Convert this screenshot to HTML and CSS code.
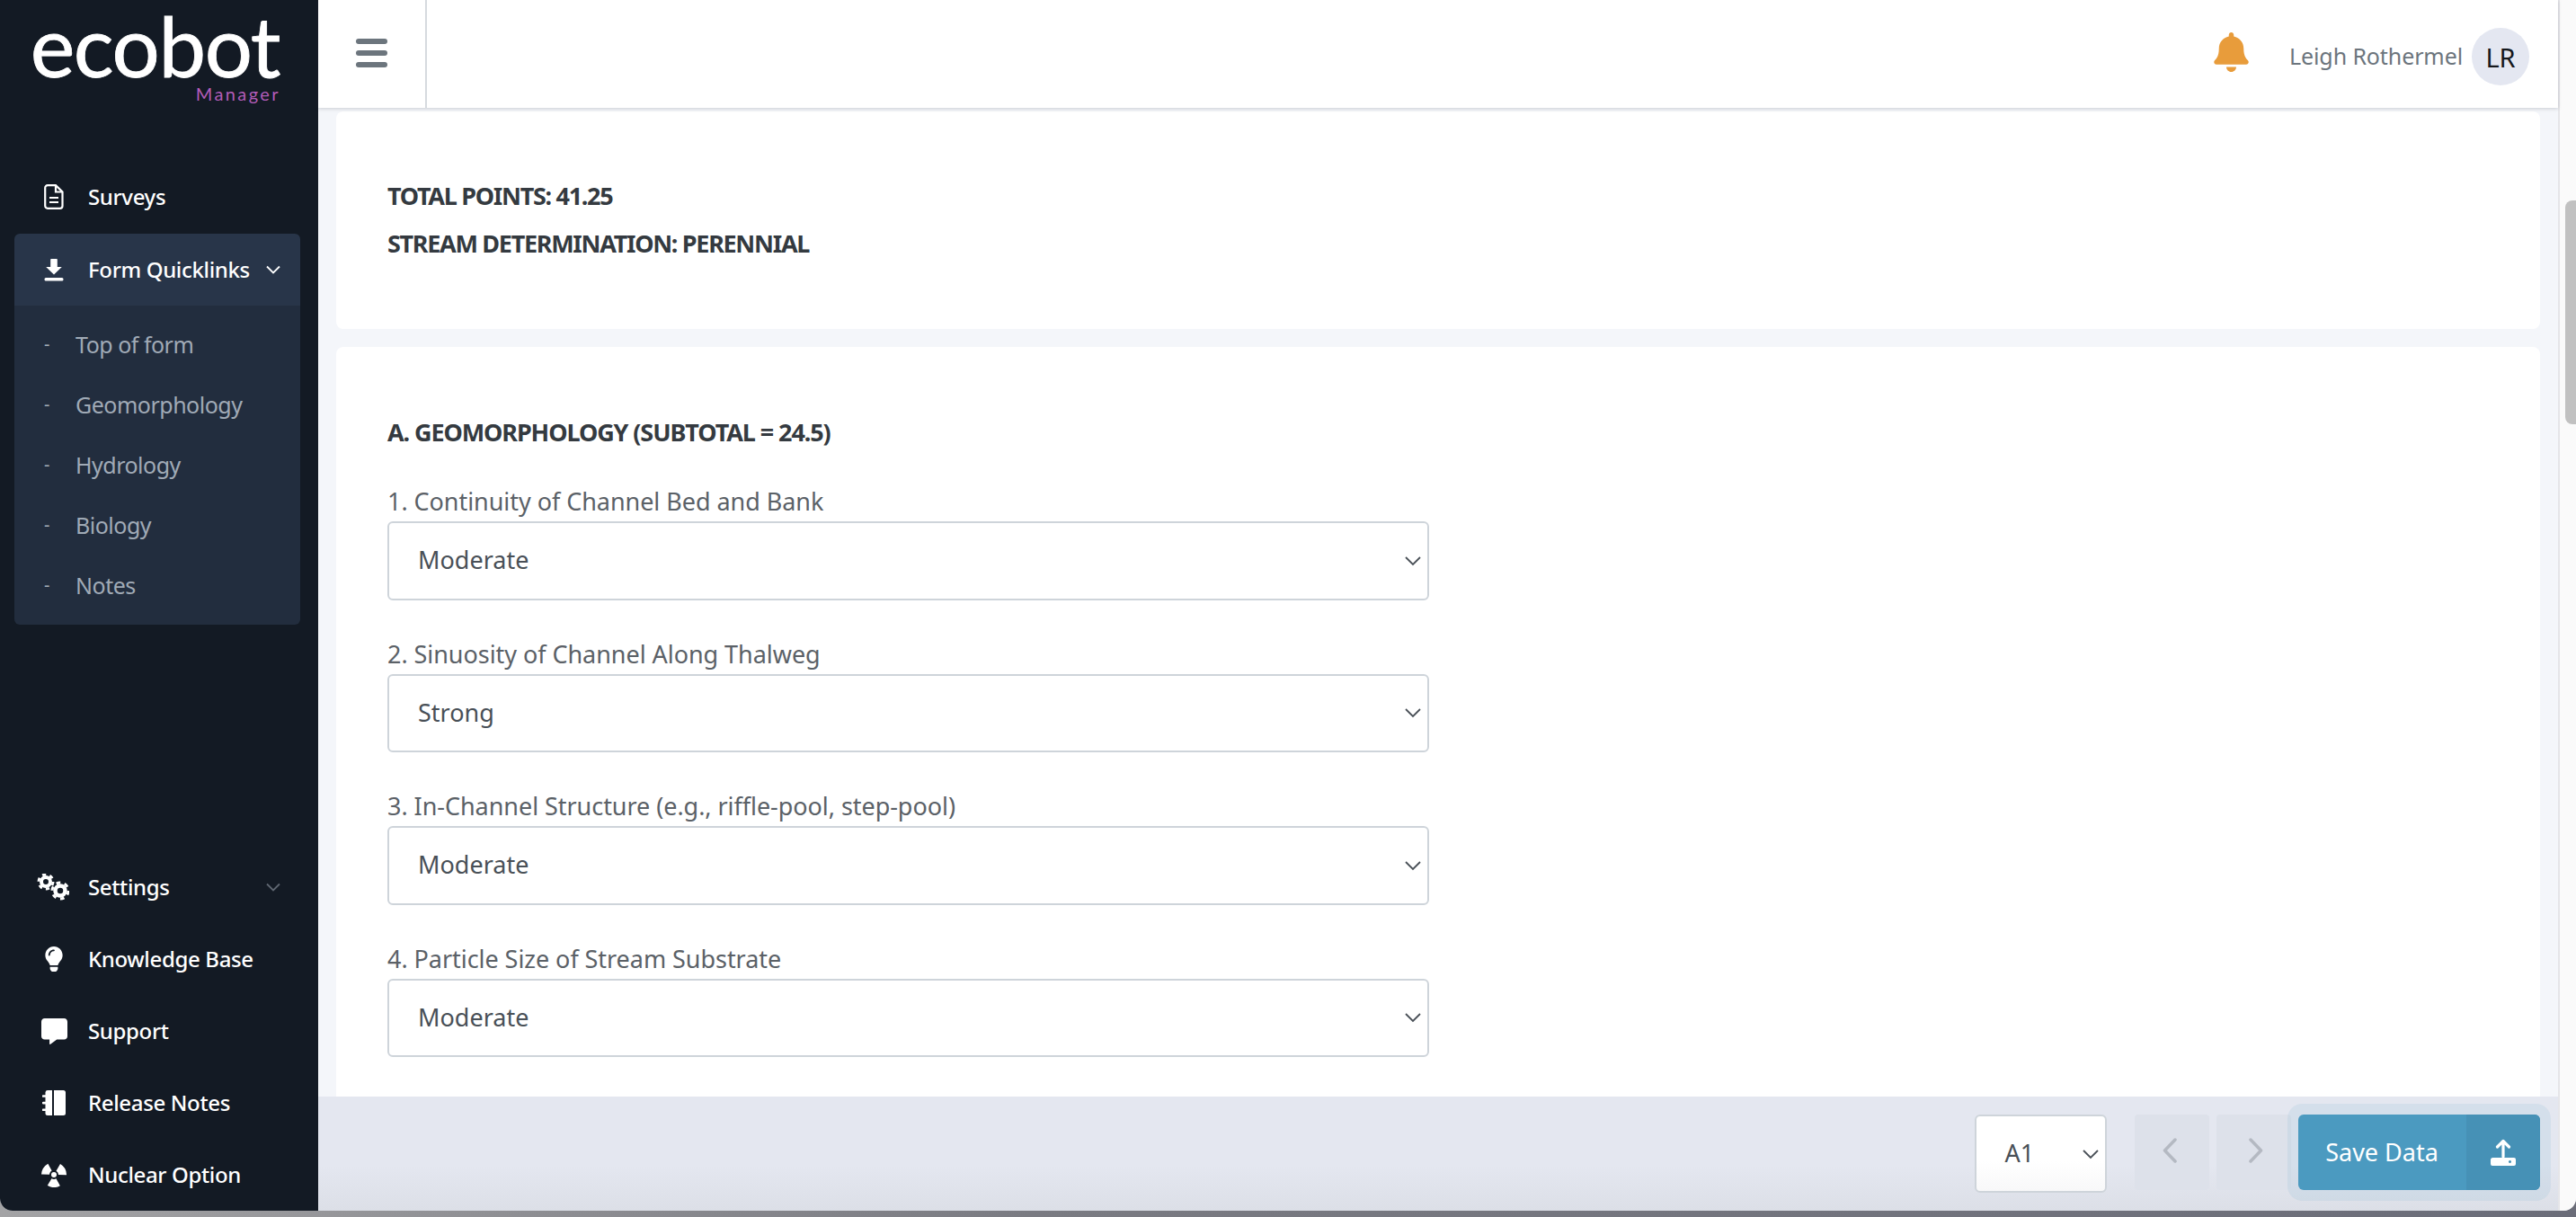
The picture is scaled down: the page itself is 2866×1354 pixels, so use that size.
FILE: index.html
```html
<!DOCTYPE html>
<html lang="en">
<head>
<meta charset="utf-8">
<title>Ecobot Manager</title>
<link rel="stylesheet" href="styles.css">
</head>
<body>
<div class="window">
  <aside class="sidebar">
    <div class="brand">
      <div class="brand-name">ecobot</div>
      <div class="brand-sub">Manager</div>
    </div>
    <nav class="nav">
      <a class="nav-row"><span class="nav-icon"><svg width="22" height="28" viewBox="0 0 22 28"><path d="M4 1.2h9l7.5 7.3V24a2.8 2.8 0 0 1-2.8 2.8H4A2.8 2.8 0 0 1 1.2 24V4A2.8 2.8 0 0 1 4 1.2z" fill="none" stroke="#fff" stroke-width="2.2"/><path d="M13 1.5v7h7M6 15h10M6 20h10" fill="none" stroke="#fff" stroke-width="2.2"/></svg></span><span class="nav-text">Surveys</span></a>
      <a class="nav-row nav-row-active"><span class="nav-icon"><svg width="22" height="25" viewBox="0 0 22 25"><path d="M8 0h6a.8.8 0 0 1 .8.8V9h5L11 17.6 2.200 9h5V.8A.8.8 0 0 1 8 0z" fill="#fff"/><rect x="0.500" y="21" width="21" height="3.500" rx="1.500" fill="#fff"/></svg></span><span class="nav-text">Form Quicklinks</span><svg class="nav-caret" width="16" height="10" viewBox="0 0 16 10"><path d="M1 1.500l7 7 7-7" fill="none" stroke="#fff" stroke-width="1.800"/></svg></a>
      <ul class="subnav">
        <li class="subnav-item"><span class="subnav-dash">-</span>Top of form</li>
        <li class="subnav-item"><span class="subnav-dash">-</span>Geomorphology</li>
        <li class="subnav-item"><span class="subnav-dash">-</span>Hydrology</li>
        <li class="subnav-item"><span class="subnav-dash">-</span>Biology</li>
        <li class="subnav-item"><span class="subnav-dash">-</span>Notes</li>
      </ul>
    </nav>
    <nav class="nav nav-bottom">
      <a class="nav-row"><span class="nav-icon nav-icon-cogs"><svg width="36" height="30" viewBox="0 0 36 30"><g fill="none" stroke="#fff"><circle cx="10" cy="9" r="5" stroke-width="4"/><circle cx="10" cy="9" r="8" stroke-width="3" stroke-dasharray="4.200 4.180"/><circle cx="26" cy="19" r="5.500" stroke-width="4.500"/><circle cx="26" cy="19" r="9" stroke-width="3" stroke-dasharray="4.700 4.720"/></g></svg></span><span class="nav-text">Settings</span><svg class="nav-caret nav-caret-dim" width="16" height="10" viewBox="0 0 16 10"><path d="M1 1.500l7 7 7-7" fill="none" stroke="#5f6772" stroke-width="1.800"/></svg></a>
      <a class="nav-row"><span class="nav-icon"><svg width="20" height="28" viewBox="0 0 352 512"><path fill="#fff" d="M96.060 454.350c.01 6.290 1.870 12.450 5.360 17.690l17.090 25.690a31.990 31.990 0 0 0 26.640 14.280h61.710a31.990 31.990 0 0 0 26.640-14.280l17.090-25.690a31.989 31.989 0 0 0 5.360-17.690l.04-38.350H96.010l.05 38.350zM0 176c0 44.370 16.450 84.850 43.560 115.780 16.520 18.850 42.360 58.230 52.210 91.450.04.26.07.52.11.78h160.240c.04-.26.07-.51.11-.78 9.850-33.220 35.690-72.600 52.210-91.450C335.550 260.850 352 220.370 352 176 352 78.610 272.910-.3 175.450 0 73.440.31 0 82.970 0 176zm176-80c-44.110 0-80 35.890-80 80 0 8.840-7.160 16-16 16s-16-7.160-16-16c0-61.760 50.240-112 112-112 8.840 0 16 7.160 16 16s-7.160 16-16 16z"/></svg></span><span class="nav-text">Knowledge Base</span></a>
      <a class="nav-row"><span class="nav-icon"><svg width="29" height="29" viewBox="0 0 512 512"><path fill="#fff" d="M448 0H64C28.700 0 0 28.700 0 64v288c0 35.300 28.700 64 64 64h96v84c0 9.800 11.200 15.500 19.100 9.700L304 416h144c35.300 0 64-28.700 64-64V64c0-35.300-28.700-64-64-64z"/></svg></span><span class="nav-text">Support</span></a>
      <a class="nav-row"><span class="nav-icon"><svg width="26" height="28" viewBox="0 0 26 28"><path fill="#fff" d="M6 0h5v28H6a2.500 2.500 0 0 1-2.500-2.500V23H1a1 1 0 0 1 0-2.600h2.500v-5H1a1 1 0 0 1 0-2.600h2.500v-5H1a1 1 0 0 1 0-2.600h2.500v-3A2.500 2.500 0 0 1 6 0zM13 0h10.500A2.500 2.500 0 0 1 26 2.500v23a2.500 2.500 0 0 1-2.500 2.500H13z"/></svg></span><span class="nav-text">Release Notes</span></a>
      <a class="nav-row"><span class="nav-icon"><svg width="28" height="28" viewBox="0 0 28 28"><circle cx="14" cy="14" r="9.500" fill="none" stroke="#fff" stroke-width="9" stroke-dasharray="9.950 9.950" transform="rotate(-60 14 14)"/><circle cx="14" cy="14" r="3" fill="#fff"/></svg></span><span class="nav-text">Nuclear Option</span></a>
    </nav>
  </aside>

  <div class="main">
    <header class="topbar">
      <button class="menu-toggle" type="button" aria-label="Menu"><span class="menu-bar"></span><span class="menu-bar"></span><span class="menu-bar"></span></button>
      <div class="topbar-user">
        <svg class="bell" width="39" height="44" viewBox="0 0 448 512"><path fill="#e89c3b" d="M224 512c35.320 0 63.970-28.650 63.970-64H160.030c0 35.350 28.650 64 63.970 64zm215.390-149.710c-19.320-20.760-55.470-51.990-55.470-154.290 0-77.700-54.480-139.900-127.940-155.160V32c0-17.670-14.320-32-31.980-32s-31.980 14.330-31.980 32v20.840C118.560 68.100 64.080 130.300 64.080 208c0 102.300-36.150 133.530-55.470 154.290-6 6.450-8.660 14.160-8.610 21.710.11 16.400 12.980 32 32.100 32h383.800c19.120 0 32-15.600 32.100-32 .05-7.550-2.610-15.270-8.610-21.710z"/></svg>
        <span class="user-name">Leigh Rothermel</span>
        <span class="avatar">LR</span>
      </div>
    </header>

    <main class="content">
      <section class="card card-summary">
        <p class="summary-line">TOTAL POINTS: 41.25</p>
        <p class="summary-line">STREAM DETERMINATION: PERENNIAL</p>
      </section>
      <section class="card card-form">
        <h2 class="section-title">A. GEOMORPHOLOGY (SUBTOTAL = 24.5)</h2>
        <div class="field">
          <label class="field-label">1. Continuity of Channel Bed and Bank</label>
          <div class="select-box"><span class="select-value">Moderate</span><svg class="select-caret" width="18" height="11" viewBox="0 0 18 11"><path d="M1 1l8 8 8-8" fill="none" stroke="#495057" stroke-width="1.800"/></svg></div>
        </div>
        <div class="field">
          <label class="field-label">2. Sinuosity of Channel Along Thalweg</label>
          <div class="select-box"><span class="select-value">Strong</span><svg class="select-caret" width="18" height="11" viewBox="0 0 18 11"><path d="M1 1l8 8 8-8" fill="none" stroke="#495057" stroke-width="1.800"/></svg></div>
        </div>
        <div class="field">
          <label class="field-label">3. In-Channel Structure (e.g., riffle-pool, step-pool)</label>
          <div class="select-box"><span class="select-value">Moderate</span><svg class="select-caret" width="18" height="11" viewBox="0 0 18 11"><path d="M1 1l8 8 8-8" fill="none" stroke="#495057" stroke-width="1.800"/></svg></div>
        </div>
        <div class="field">
          <label class="field-label">4. Particle Size of Stream Substrate</label>
          <div class="select-box"><span class="select-value">Moderate</span><svg class="select-caret" width="18" height="11" viewBox="0 0 18 11"><path d="M1 1l8 8 8-8" fill="none" stroke="#495057" stroke-width="1.800"/></svg></div>
        </div>
      </section>
    </main>

    <footer class="actionbar">
      <div class="select-box select-box-small"><span class="select-value">A1</span><svg class="select-caret" width="18" height="11" viewBox="0 0 18 11"><path d="M1 1l8 8 8-8" fill="none" stroke="#495057" stroke-width="1.800"/></svg></div>
      <div class="pager">
        <button class="pager-btn pager-prev" type="button" aria-label="Previous"><svg width="16" height="28" viewBox="0 0 16 28"><path d="M14 2L2.500 14 14 26" fill="none" stroke="#b4b9c2" stroke-width="3.500" stroke-linecap="round" stroke-linejoin="round"/></svg></button>
        <button class="pager-btn pager-next" type="button" aria-label="Next"><svg width="16" height="28" viewBox="0 0 16 28"><path d="M2 2l11.500 12L2 26" fill="none" stroke="#b4b9c2" stroke-width="3.500" stroke-linecap="round" stroke-linejoin="round"/></svg></button>
      </div>
      <button class="save-btn" type="button">
        <span class="save-label">Save Data</span>
        <span class="save-icon"><svg width="28" height="30" viewBox="0 0 28 30"><path d="M14 2.500V20M7.500 9L14 2.500 20.500 9" fill="none" stroke="#fff" stroke-width="3.200" stroke-linecap="round" stroke-linejoin="round"/><path fill="#fff" fill-rule="evenodd" d="M2.500 21H26a2 2 0 0 1 2 2v5a2 2 0 0 1-2 2H2a2 2 0 0 1-2-2v-4.500A2.500 2.500 0 0 1 2.500 21zM23 25.500a1.500 1.500 0 1 0 0 .01z"/></svg></span>
      </button>
    </footer>
  </div>

  <div class="scrolltrack"><div class="scrollthumb"></div></div>
</div>
</body>
</html>
```

FILE: styles.css
```css
* { box-sizing: border-box; }

html, body {
  margin: 0;
  height: 100%;
}

body {
  height: 1354px;
  overflow: hidden;
  background: linear-gradient(90deg, #a3a3a5 0%, #7a7b82 40%, #6b6d79 100%);
  font-family: "Noto Sans", sans-serif;
}

.window {
  display: grid;
  grid-template-columns: 354px 1fr 20px;
  height: 1347px;
  overflow: hidden;
  border-radius: 0 0 14px 14px;
  background: #f4f6fa;
}

/* Sidebar */
.sidebar {
  display: flex;
  flex-direction: column;
  height: 100%;
  background: #131a24;
}

.brand {
  height: 179px;
  padding: 8px 42px 0 0;
  text-align: right;
}

.brand-name {
  height: 84px;
  margin-right: 1px;
  font-family: "Lato", sans-serif;
  font-size: 94px;
  line-height: 84px;
  letter-spacing: -1.400px;
  color: #fff;
  -webkit-text-stroke: 0.800px #fff;
}

.brand-sub {
  font-family: "Lato", sans-serif;
  font-size: 20px;
  line-height: 24px;
  letter-spacing: 2.400px;
  color: #b25cb8;
}

.nav-bottom { margin-top: auto; }

.nav-row {
  display: flex;
  align-items: center;
  height: 80px;
  margin: 0 20px 0 16px;
  padding: 0 22px 0 24px;
  color: #fff;
  border-radius: 6px 6px 0 0;
}

.nav-row-active {
  margin-top: 1px;
  background: #283549;
}

.nav-icon {
  display: flex;
  justify-content: center;
  align-items: center;
  flex: 0 0 40px;
  margin-right: 18px;
}

.nav-icon-cogs { transform: translateX(-1px); }

.nav-text {
  margin-top: -1px;
  font-size: 24px;
  font-weight: 500;
  letter-spacing: -0.350px;
}

.nav-caret { margin-left: auto; }

.subnav {
  list-style: none;
  margin: 0 20px 0 16px;
  padding: 10px 0;
  background: #222d3e;
  border-radius: 0 0 6px 6px;
}

.subnav-item {
  display: flex;
  align-items: center;
  height: 67px;
  padding: 0 0 2px 33px;
  font-size: 25px;
  letter-spacing: -0.500px;
  color: #a0aab6;
}

.subnav-dash {
  width: 35px;
  font-size: 20px;
  color: #a0aab6;
}

/* Main column */
.main {
  display: flex;
  flex-direction: column;
  height: 1347px;
  min-width: 0;
}

.topbar {
  position: relative;
  z-index: 2;
  display: flex;
  align-items: stretch;
  justify-content: space-between;
  flex: 0 0 120px;
  padding-right: 32px;
  background: #fff;
  box-shadow: 0 1px 4px rgba(50, 55, 75, 0.22);
}

.menu-toggle {
  display: flex;
  flex-direction: column;
  align-items: center;
  justify-content: center;
  gap: 7.500px;
  width: 121px;
  padding: 0 1px 2px 0;
  border: 0;
  border-right: 2px solid #d6dadf;
  background: transparent;
}

.menu-bar {
  display: block;
  width: 35px;
  height: 5.500px;
  border-radius: 3px;
  background: #6c757d;
}

.topbar-user {
  display: flex;
  align-items: center;
}

.bell {
  margin-right: 45px;
  margin-top: -4px;
}

.user-name {
  margin: 3px 10px 0 0;
  font-size: 25px;
  letter-spacing: -0.100px;
  color: #6c757d;
}

.avatar {
  display: flex;
  align-items: center;
  justify-content: center;
  width: 64px;
  height: 64px;
  margin-top: 6px;
  border-radius: 50%;
  background: #e4e7f1;
  font-size: 29px;
  color: #15181c;
}

.content {
  flex: 1;
  min-height: 0;
  overflow: hidden;
  padding: 4px 20px 0;
  background: #f4f6fa;
}

.card {
  padding-left: 57px;
  background: #fff;
  border-radius: 8px;
}

.card-summary {
  height: 242px;
  margin-bottom: 20px;
  padding-top: 74px;
}

.summary-line {
  margin: 0 0 13px;
  font-size: 27px;
  line-height: 40px;
  font-weight: 700;
  letter-spacing: -1.300px;
  color: #343a40;
}

.card-form {
  padding-top: 75px;
  padding-bottom: 40px;
}

.section-title {
  margin: 0 0 37px;
  font-size: 27px;
  line-height: 40px;
  font-weight: 700;
  letter-spacing: -1.100px;
  color: #343a40;
}

.field { margin-bottom: 40px; }

.field-label {
  display: block;
  height: 42px;
  font-size: 27px;
  line-height: 40px;
  letter-spacing: -0.050px;
  color: #5b6167;
}

.select-box {
  position: relative;
  display: flex;
  align-items: center;
  width: 1159px;
  height: 87.500px;
  padding: 0 0 2px 32px;
  background: #fff;
  border: 2px solid #ced4da;
  border-radius: 6px;
}

.select-value {
  font-size: 27px;
  color: #495057;
}

.select-caret {
  position: absolute;
  right: 7px;
  top: 50%;
  margin-top: -5px;
}

/* Action bar */
.actionbar {
  position: relative;
  display: flex;
  align-items: flex-start;
  justify-content: flex-end;
  flex: 0 0 127px;
  padding: 20px 20.500px 0 0;
  background: linear-gradient(180deg, #e4e7f0 0%, #e4e7f0 60%, #dcdfe7 100%);
}

.select-box-small {
  width: 147px;
  height: 87px;
  margin-right: 31px;
  background: linear-gradient(180deg, #fff 60%, #f8f8f9 100%);
}

.pager {
  display: flex;
  gap: 8px;
  margin-right: 8px;
}

.pager-btn {
  display: flex;
  align-items: center;
  justify-content: center;
  width: 83px;
  height: 84px;
  padding: 0 0 4px;
  border: 0;
  border-radius: 4px;
  background: #dde1ea;
}

.pager-prev { padding-right: 4px; }
.pager-next { padding-left: 5px; }

.save-btn {
  position: relative;
  display: flex;
  align-items: stretch;
  width: 269px;
  height: 84px;
  padding: 0;
  border: 0;
  border-radius: 6px;
  background: #4b9ac0;
  box-shadow: 0 0 0 12px rgba(74, 155, 194, 0.1);
  overflow: hidden;
  color: #fff;
}

.save-label {
  flex: 1;
  align-self: center;
  margin-top: -2px;
  font-family: "Noto Sans", sans-serif;
  font-size: 27px;
  text-align: center;
}

.save-icon {
  display: flex;
  align-items: center;
  justify-content: center;
  flex: 0 0 82px;
  background: #4691b6;
}

/* Page scrollbar */
.scrolltrack {
  overflow: hidden;
  padding: 223px 0 0 6px;
  background: #fafafa;
  border-left: 2px solid #e5e5e8;
}

.scrollthumb {
  width: 12px;
  height: 249px;
  background: #c1c1c1;
  border-radius: 8px 0 0 8px;
}
```
